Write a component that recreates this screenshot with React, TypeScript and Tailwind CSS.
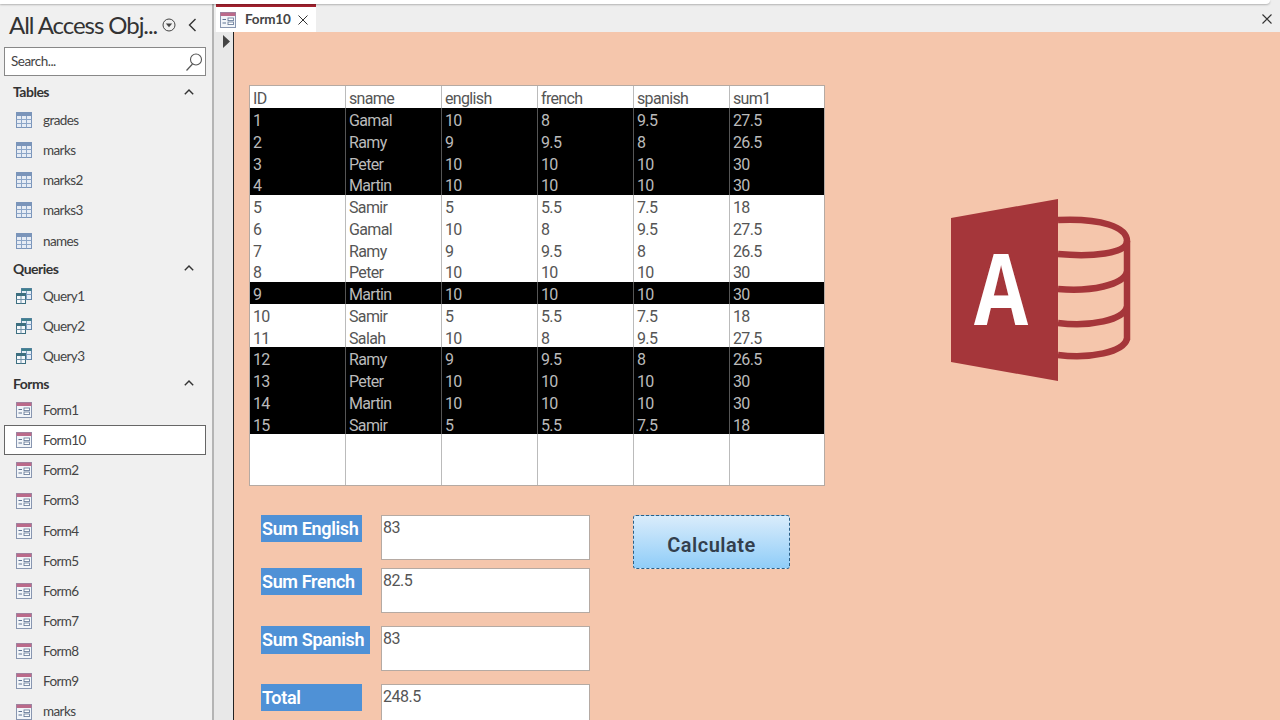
const tables = ["grades", "marks", "marks2", "marks3", "names"];
const queries = ["Query1", "Query2", "Query3"];
const forms = ["Form1", "Form10", "Form2", "Form3", "Form4", "Form5", "Form6", "Form7", "Form8", "Form9", "marks"];
const cols = ["ID", "sname", "english", "french", "spanish", "sum1"];
const rows = [
  ["1", "Gamal", "10", "8", "9.5", "27.5", 1],
  ["2", "Ramy", "9", "9.5", "8", "26.5", 1],
  ["3", "Peter", "10", "10", "10", "30", 1],
  ["4", "Martin", "10", "10", "10", "30", 1],
  ["5", "Samir", "5", "5.5", "7.5", "18", 0],
  ["6", "Gamal", "10", "8", "9.5", "27.5", 0],
  ["7", "Ramy", "9", "9.5", "8", "26.5", 0],
  ["8", "Peter", "10", "10", "10", "30", 0],
  ["9", "Martin", "10", "10", "10", "30", 1],
  ["10", "Samir", "5", "5.5", "7.5", "18", 0],
  ["11", "Salah", "10", "8", "9.5", "27.5", 0],
  ["12", "Ramy", "9", "9.5", "8", "26.5", 1],
  ["13", "Peter", "10", "10", "10", "30", 1],
  ["14", "Martin", "10", "10", "10", "30", 1],
  ["15", "Samir", "5", "5.5", "7.5", "18", 1],
];

function TableIcon() {
  return (
    <svg width="16" height="16" viewBox="0 0 16 16" className="shrink-0">
      <rect x="0.5" y="0.5" width="15" height="15" fill="#e6ecf5" stroke="#7b95ba" />
      <rect x="0.5" y="0.5" width="15" height="3.5" fill="#7b95ba" />
      <path d="M0.5 7.5H15.5M0.5 11.5H15.5M5.5 4V15.5M10.5 4V15.5" stroke="#8ca6c8" strokeWidth="1" fill="none" />
    </svg>
  );
}

function QueryIcon() {
  return (
    <svg width="16" height="16" viewBox="0 0 16 16" className="shrink-0">
      <rect x="5.5" y="0.5" width="10" height="11" fill="#e4ecf5" stroke="#5f84a8" />
      <rect x="5.5" y="0.5" width="10" height="2.5" fill="#3f7f8c" />
      <path d="M5.5 6.5H15.5M10.5 3V11.5" stroke="#7f9cc2" fill="none" />
      <rect x="0.5" y="5.5" width="9" height="10" fill="#f4f7fa" stroke="#3d6f80" />
      <rect x="0.5" y="5.5" width="9" height="2.5" fill="#3d6f80" />
      <path d="M0.5 11.5H9.5M5 8V15.5" stroke="#6f90a8" fill="none" />
    </svg>
  );
}

function FormIcon() {
  return (
    <svg width="16" height="16" viewBox="0 0 16 16" className="shrink-0">
      <rect x="0.5" y="0.5" width="15" height="15" fill="#f2f5f9" stroke="#8896b0" />
      <rect x="0.5" y="0.5" width="15" height="3.5" fill="#bb6a8a" />
      <path d="M2.5 7.5H6M2.5 11H6" stroke="#5d7292" fill="none" />
      <rect x="8" y="6" width="5.5" height="2.6" fill="#fff" stroke="#5d7292" strokeWidth="0.8" />
      <rect x="8" y="10" width="5.5" height="2.6" fill="#fff" stroke="#5d7292" strokeWidth="0.8" />
    </svg>
  );
}

function Chevron() {
  return (
    <svg width="10" height="6" viewBox="0 0 10 6" className="shrink-0">
      <path d="M0.8 5.2L5 1L9.2 5.2" stroke="#333" strokeWidth="1.4" fill="none" />
    </svg>
  );
}

function Group({ title, h }: { title: string; h: string }) {
  return (
    <div className={`flex items-center justify-between pl-[13px] pr-[18px] ${h}`}>
      <span className="text-[14px] font-bold text-[#333] tracking-[-0.5px]">{title}</span>
      <Chevron />
    </div>
  );
}

function Item({ label, icon, selected }: { label: string; icon: React.ReactNode; selected?: boolean }) {
  return (
    <div
      className={`flex items-center gap-[11px] pl-[12px] h-[30.15px] ml-[4px] mr-[6px] text-[13.5px] text-[#444] tracking-[-0.6px] ${
        selected ? "bg-white outline outline-1 -outline-offset-1 outline-[#666]" : ""
      }`}
    >
      {icon}
      <span>{label}</span>
    </div>
  );
}

function Sidebar() {
  return (
    <aside className="w-[212px] shrink-0 bg-[#f0f0f0] overflow-hidden font-['Lato',sans-serif]">
      <div className="flex items-center h-[38px] pl-[9px] mt-[6px]">
        <span className="w-[152px] shrink-0 text-[24px] text-[#333] tracking-[-1.05px] whitespace-nowrap">All Access Obj...</span>
        <svg width="16" height="16" viewBox="0 0 16 16" className="shrink-0">
          <circle cx="8" cy="8" r="6" stroke="#444" strokeWidth="1" fill="none" />
          <path d="M4.8 6.5H11.2L8 10.2Z" fill="#444" />
        </svg>
        <svg width="9" height="14" viewBox="0 0 9 14" className="ml-[11px] shrink-0">
          <path d="M7.5 1L1.5 7L7.5 13" stroke="#333" strokeWidth="1.4" fill="none" />
        </svg>
      </div>
      <div className="flex items-center justify-between ml-[4px] mr-[6px] h-[29px] bg-white border border-[#888] pl-[6px] pr-[2px] mt-[3px]">
        <span className="text-[13.5px] text-[#444] tracking-[-0.5px]">Search...</span>
        <svg width="18" height="20" viewBox="0 0 18 20">
          <circle cx="11" cy="7.5" r="5.5" stroke="#555" strokeWidth="1.1" fill="none" />
          <path d="M7.5 12L1.5 18.5" stroke="#555" strokeWidth="1.2" fill="none" />
        </svg>
      </div>
      <div className="mt-[2px]">
        <Group title="Tables" h="h-[27px]" />
      </div>
      {tables.map((t) => (
        <Item key={t} label={t} icon={<TableIcon />} />
      ))}
      <Group title="Queries" h="h-[25px]" />
      {queries.map((t) => (
        <Item key={t} label={t} icon={<QueryIcon />} />
      ))}
      <Group title="Forms" h="h-[24px]" />
      {forms.map((t) => (
        <Item key={t} label={t} icon={<FormIcon />} selected={t === "Form10"} />
      ))}
    </aside>
  );
}

function DataTable() {
  const grid = "grid grid-cols-[95px_96px_96px_96px_96px_95px]";
  return (
    <div className="w-[576px] h-[401px] bg-white border border-[#b5aaa3] flex flex-col text-[16px] font-['Roboto',sans-serif] font-normal tracking-[-0.65px]">
      <div className={`${grid} h-[22px] text-[#555]`}>
        {cols.map((c, i) => (
          <div key={c} className={`pl-[3px] pt-[4px] leading-[18px] ${i ? "border-l border-[#bbb]" : ""}`}>{c}</div>
        ))}
      </div>
      {rows.map((r) => (
        <div
          key={String(r[0])}
          className={`${grid} h-[21.75px] ${r[6] ? "bg-black text-[#bbbbbb]" : "bg-white text-[#555]"}`}
        >
          {r.slice(0, 6).map((v, i) => (
            <div key={i} className={`pl-[3px] pt-[4px] leading-[17.75px] ${i ? `border-l ${r[6] ? "border-[#555]" : "border-[#bbb]"}` : ""}`}>{v}</div>
          ))}
        </div>
      ))}
      <div className={`${grid} flex-1`}>
        {cols.map((c, i) => (
          <div key={c} className={i ? "border-l border-[#bbb]" : ""} />
        ))}
      </div>
    </div>
  );
}

function Field({ label, value, w = "w-[101px]", lh = "h-[27px]", mt = "mt-0" }: { label: string; value: string; w?: string; lh?: string; mt?: string }) {
  return (
    <div className={`flex ${mt}`}>
      <div className="w-[120px] shrink-0">
        <div className={`${w} ${lh} bg-[#4f91d6] text-white text-[18px] font-semibold font-['Roboto',sans-serif] leading-[27px] pl-[1px] tracking-[-0.35px] whitespace-nowrap`}>{label}</div>
      </div>
      <div className="w-[209px] h-[45px] shrink-0 bg-white border border-[#b5aaa3] pl-[1px] pt-[1px] text-[16px] leading-[22px] text-[#555] font-['Roboto',sans-serif] tracking-[-0.5px]">
        {value}
      </div>
    </div>
  );
}

function AccessLogo() {
  return (
    <svg width="180" height="182" viewBox="0 0 180 182">
      <g fill="none" stroke="#a5363a" strokeWidth="6.5">
        <path d="M107 21C150 19 176 28 176 42C176 55 140 58 107 55" />
        <path d="M176 42V141" />
        <path d="M176 73C172 86 140 93 107 90" />
        <path d="M176 108C172 121 140 128 107 124" />
        <path d="M176 140C172 153 140 160 107 156" />
      </g>
      <polygon points="0,19 107,0 107,182 0,163" fill="#a5363a" />
      <text transform="translate(50 126) scale(0.8 1)" textAnchor="middle" fill="#fff" fontSize="98" fontWeight="700" fontFamily="Open Sans, sans-serif">A</text>
    </svg>
  );
}

export default function App() {
  return (
    <div className="w-[1280px] h-[720px] overflow-hidden bg-[#eeeeee] relative flex">
      <div className="absolute left-0 top-0 w-[1270px] h-[4px] bg-white rounded-br-[6px] shadow-[0_1px_2px_rgba(0,0,0,0.25)] z-10" />
      <Sidebar />
      <div className="w-[2px] shrink-0 bg-[#b4b4b4]" />
      <div className="flex-1 flex flex-col min-w-0">
        <div className="h-[32px] shrink-0 flex justify-between pt-[4px] bg-[#eeeeee]">
          <div className="ml-[2px] w-[100px] h-[28px] bg-white border-t-[3px] border-[#a5222f] flex items-center pl-[4px] font-['Lato',sans-serif]">
            <FormIcon />
            <span className="ml-[9px] w-[45px] text-[13.5px] font-bold text-[#444] tracking-[-0.2px]">Form10</span>
            <svg width="10" height="10" viewBox="0 0 10 10" className="ml-[8px]">
              <path d="M0.5 0.5L9.5 9.5M9.5 0.5L0.5 9.5" stroke="#333" strokeWidth="1" fill="none" />
            </svg>
          </div>
          <svg width="10" height="10" viewBox="0 0 10 10" className="mr-[8px] mt-[10px]">
            <path d="M0.5 0.5L9.5 9.5M9.5 0.5L0.5 9.5" stroke="#333" strokeWidth="1.1" fill="none" />
          </svg>
        </div>
        <div className="flex-1 flex min-h-0">
          <div className="w-[19px] shrink-0 bg-[#e8e8e8] pt-[3px] pl-[9px]">
            <svg width="7" height="13" viewBox="0 0 7 13"><path d="M0 0L7 6.5L0 13Z" fill="#444" /></svg>
          </div>
          <div className="w-[1px] shrink-0 bg-[#222]" />
          <div className="flex-1 bg-[#f5c6ac] flex pl-[15px] pt-[53px] overflow-hidden">
            <div className="w-[577px] shrink-0">
              <DataTable />
              <div className="flex mt-[29px] pl-[12px]">
                <div className="w-[372px] shrink-0 flex flex-col">
                  <Field label="Sum English" value="83" />
                  <Field label="Sum French" value="82.5" mt="mt-[8px]" />
                  <Field label="Sum Spanish" value="83" w="w-[109px]" lh="h-[28px]" mt="mt-[13px]" />
                  <Field label="Total" value="248.5" mt="mt-[13px]" />
                </div>
                <button className="w-[157px] h-[54px] pt-[6px] rounded-[3px] border border-dashed border-[#2b5f86] bg-gradient-to-b from-[#d9ecfb] to-[#8fcdf8] text-[20px] font-semibold text-[#333f4d] tracking-[0.5px] font-['Roboto',sans-serif]">
                  Calculate
                </button>
              </div>
            </div>
            <div className="ml-[125px] mt-[114px] shrink-0 h-[182px]">
              <AccessLogo />
            </div>
          </div>
        </div>
      </div>
    </div>
  );
}
